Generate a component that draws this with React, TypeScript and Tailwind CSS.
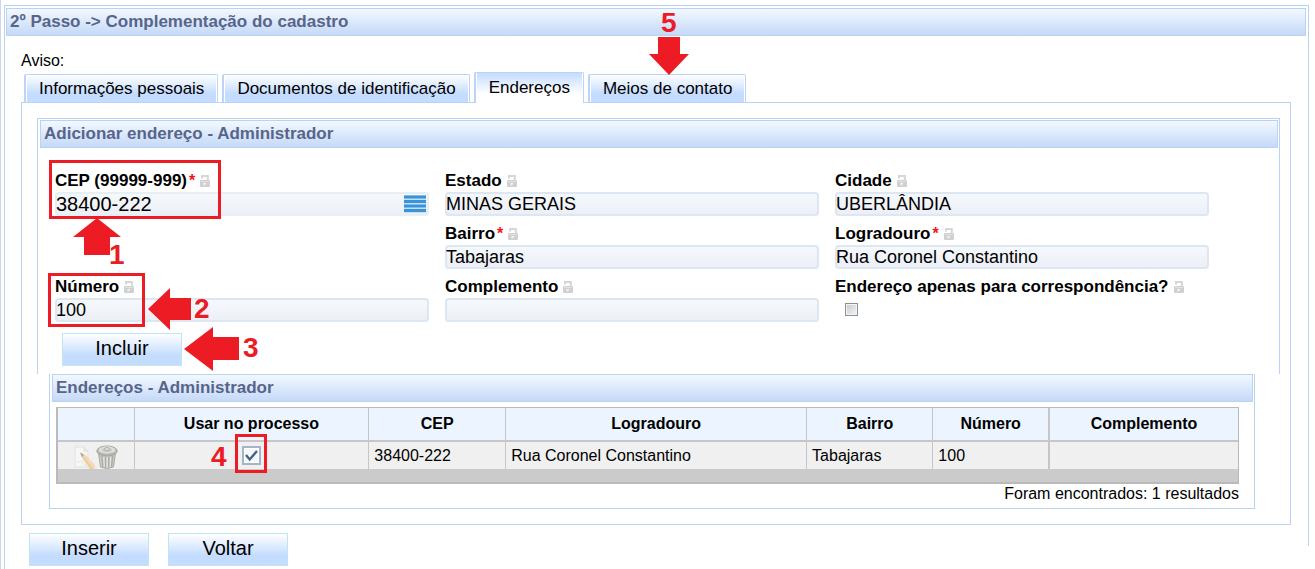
import React, { useState } from "react";

function LockIcon() {
  return (
    <svg width="10" height="12" viewBox="0 0 10 12" aria-hidden="true" className="shrink-0">
      <path d="M2 3.4V1H7.8V6" fill="none" stroke="#d6d6d6" strokeWidth="2" />
      <rect x="0" y="5" width="10" height="7" rx="1" fill="#d0d0d0" />
      <rect x="1" y="6" width="8" height="1" fill="#e2e2e2" />
      <path d="M3.5 8H6V9.5H4.5V10.5H3.5Z" fill="#f6f6f6" />
    </svg>
  );
}

function ListIcon() {
  return (
    <svg width="22" height="18" viewBox="0 0 22 18" aria-hidden="true">
      <rect width="22" height="18" fill="#c3e0f5" />
      {[0.5, 5, 9.5, 14].map((y) => (
        <rect key={y} y={y} width="22" height="3" fill="#3a93d8" />
      ))}
    </svg>
  );
}

function EditIcon() {
  return (
    <svg width="22" height="23" viewBox="0 0 22 23" aria-hidden="true">
      <path d="M1 1H10L14 5V21H1Z" fill="#f6f6f2" stroke="#dfe3e6" />
      <path d="M10 1V5H14" fill="#e6e9ea" stroke="#dcdfe2" />
      <path d="M3 17Q7 13 9 17T14 17" fill="none" stroke="#e2e4e6" />
      <path d="M6.5 7L12.5 9.5L21 19.5V23H15.5L9 14Z" fill="#f3d9b4" />
      <path d="M9.5 11L18 23" stroke="#e9c594" strokeWidth="1.2" />
      <path d="M6 6.5L10 8.5L8 11.5Z" fill="#a9aaa8" />
    </svg>
  );
}

function TrashIcon() {
  return (
    <svg width="22" height="24" viewBox="0 0 22 24" aria-hidden="true">
      <path d="M2.5 8L4.5 22Q11 25 17.5 22L19.5 8Z" fill="#c9c9c5" stroke="#aaaaa6" />
      <path d="M6 11L7 22M9.5 12V23M13 12L12.5 23M16.5 11L15.5 22" stroke="#a9a9a5" strokeWidth="1.3" />
      <path d="M7.7 12L8.3 22M11.2 12V23M14.7 12L14.2 22" stroke="#e6e6e2" strokeWidth="1.2" />
      <ellipse cx="11" cy="6" rx="10.2" ry="5" fill="#b5b5b1" stroke="#a3a39f" />
      <ellipse cx="11" cy="5" rx="8.5" ry="3.7" fill="#dededa" />
      <ellipse cx="11" cy="5" rx="5" ry="2" fill="#c9c9c5" />
      <ellipse cx="11" cy="4" rx="2.6" ry="1.4" fill="#e6e6e2" stroke="#adada9" />
    </svg>
  );
}

function Title({ children }: { children: React.ReactNode }) {
  return (
    <h2 className="h-7 border border-[#b9d3f5] bg-linear-to-b from-[#f3f8ff] to-[#c5d9f8] pl-[3px] text-[17px] leading-[26px] font-bold text-[#57658a]">
      {children}
    </h2>
  );
}

function Step({ n, className }: { n: number; className: string }) {
  return (
    <span className={`pointer-events-none absolute z-20 text-[28px] leading-7 font-bold text-[#ed1c24] ${className}`}>
      {n}
    </span>
  );
}

function Outline({ className }: { className: string }) {
  return <span className={`pointer-events-none absolute z-20 border-3 border-[#ed1c24] ${className}`} />;
}

type FieldProps = {
  id: string;
  label: string;
  value?: string;
  required?: boolean;
  large?: boolean;
  lookup?: boolean;
  className?: string;
  children?: React.ReactNode;
};

function FieldLabel({ id, label, required }: { id: string; label: string; required?: boolean }) {
  return (
    <div className="mb-px flex h-5 items-center">
      <label htmlFor={id} className="flex text-[17px] leading-5 font-bold whitespace-nowrap">
        {label}
        {required && <span className="ml-0.5 text-base leading-5 text-[#f51414]">*</span>}
      </label>
      <span className="ml-[5px] flex">
        <LockIcon />
      </span>
    </div>
  );
}

function Field({ id, label, value = "", required, large, lookup, className = "", children }: FieldProps) {
  return (
    <div className={`relative ${className}`}>
      <FieldLabel id={id} label={label} required={required} />
      <div
        className={`flex h-6 items-center rounded-[4px] bg-linear-to-b to-[#ebeff6] inset-ring-2 ${
          large ? "from-[#f6fafc] inset-ring-[#e6eef6]" : "from-[#f6f9fc] inset-ring-[#dde7f4]"
        }`}
      >
        <input
          id={id}
          defaultValue={value}
          className={`h-6 w-full min-w-0 bg-transparent pl-px outline-none ${large ? "text-[20px]" : "text-[18px]"}`}
        />
        {lookup && (
          <button type="button" aria-label="Buscar CEP" className="mr-[3px] shrink-0">
            <ListIcon />
          </button>
        )}
      </div>
      {children}
    </div>
  );
}

function ActionButton({ children }: { children: React.ReactNode }) {
  return (
    <button
      type="button"
      className="h-[33px] w-[120px] border border-[#bfe6f0] bg-linear-to-b from-white to-[#c4dcff] to-70% pb-1 text-[20px] leading-7"
    >
      {children}
    </button>
  );
}

const tabs = ["Informações pessoais", "Documentos de identificação", "Endereços", "Meios de contato"];

const columns = [
  { name: "", width: "w-[6.4%]" },
  { name: "Usar no processo", width: "w-[19.9%]" },
  { name: "CEP", width: "w-[11.6%]" },
  { name: "Logradouro", width: "w-[25.5%]" },
  { name: "Bairro", width: "w-[10.7%]" },
  { name: "Número", width: "w-[9.8%]" },
  { name: "Complemento", width: "w-[16.1%]" },
];

export default function App() {
  const [active, setActive] = useState(2);
  const [mailOnly, setMailOnly] = useState(false);
  const [inUse, setInUse] = useState(true);

  return (
    <div className="flex min-h-screen flex-col border-l border-[#ccd6ee] bg-white pt-[5px] pr-1.5 pl-[3px] font-['Liberation_Sans',Arial,sans-serif] text-black">
      <main className="grow border-l border-[#b9d3f5]">
        <section className="border-t border-r border-[#b9d3f5] pt-0.5 pr-0.5 pb-[21px] pl-px">
          <Title>2º Passo -&gt; Complementação do cadastro</Title>

          <div className="pt-[15px] pr-[15px] pl-[15px]">
            <p className="text-base leading-5">Aviso:</p>

            <div role="tablist" className="mt-px flex h-[30px] items-end gap-1 pl-[3px]">
              {tabs.map((tab, i) => (
                <div key={tab} className={`relative ${i === active ? "-mb-px" : ""}`}>
                  <button
                    type="button"
                    role="tab"
                    aria-selected={i === active}
                    onClick={() => setActive(i)}
                    className={`block rounded-t-[2px] border-t border-r border-l-2 border-[#bcd5f6] px-[13px] text-[17px] whitespace-nowrap shadow-[inset_1px_0_white,inset_-1px_0_white] ${
                      i === active
                        ? "h-[31px] bg-linear-to-b from-[#c4dcff] to-white to-70%"
                        : "h-7 bg-linear-to-b from-white to-[#c4dcff] to-70%"
                    }`}
                  >
                    {tab}
                  </button>
                  {i === 3 && (
                    <>
                      <Step n={5} className="-top-[65px] left-[73px]" />
                      <svg
                        width="40"
                        height="38"
                        viewBox="0 0 40 38"
                        aria-hidden="true"
                        className="absolute -top-[37px] left-[61px] z-20"
                      >
                        <path d="M9 0H31V17H40L20 38L0 17H9Z" fill="#ed1c24" />
                      </svg>
                    </>
                  )}
                </div>
              ))}
            </div>

            <div className="border border-[#b9d3f5] pt-[15px] pb-[15px]">
              <section className="mr-2.5 ml-[15px] border-x border-t border-[#b9d3f5] pt-px pb-2">
                <div className="pr-px pl-0.5">
                  <Title>Adicionar endereço - Administrador</Title>
                </div>

                <div className="grid grid-cols-3 gap-x-4 gap-y-2 pt-[23px] pr-[70px] pl-[17px]">
                  <Field id="cep" label="CEP (99999-999)" value="38400-222" required large lookup>
                    <Outline className="-top-[11px] -left-1.5 h-[59px] w-[172px]" />
                    <svg
                      width="48"
                      height="37"
                      viewBox="0 0 48 37"
                      aria-hidden="true"
                      className="absolute top-[47px] left-[18px] z-20"
                    >
                      <path d="M24 0L48 19H37V37H11V19H0Z" fill="#ed1c24" />
                    </svg>
                    <Step n={1} className="top-[70px] left-[54px]" />
                  </Field>
                  <Field id="estado" label="Estado" value="MINAS GERAIS" />
                  <Field id="cidade" label="Cidade" value="UBERLÂNDIA" />
                  <Field id="bairro" label="Bairro" value="Tabajaras" required className="col-start-2" />
                  <Field id="logradouro" label="Logradouro" value="Rua Coronel Constantino" required />
                  <Field id="numero" label="Número" value="100">
                    <Outline className="-top-1 -left-[7px] h-[54px] w-[97px]" />
                    <svg
                      width="43"
                      height="42"
                      viewBox="0 0 43 42"
                      aria-hidden="true"
                      className="absolute top-[11px] left-[93px] z-20"
                    >
                      <path d="M0 21L22 0V10H43V32H22V42Z" fill="#ed1c24" />
                    </svg>
                    <Step n={2} className="top-[18px] left-[139px]" />
                  </Field>
                  <Field id="complemento" label="Complemento" />
                  <div>
                    <FieldLabel id="correspondencia" label="Endereço apenas para correspondência?" />
                    <input
                      id="correspondencia"
                      type="checkbox"
                      checked={mailOnly}
                      onChange={(e) => setMailOnly(e.target.checked)}
                      className="mt-1.5 ml-2.5 block size-[13px] appearance-none border border-[#8e8f8f] bg-linear-to-br from-[#c4c9cf] to-[#f6f6f6] inset-ring-1 inset-ring-[#f4f4f4] checked:from-[#3b5f96]"
                    />
                  </div>
                </div>

                <div className="relative mt-[11px] ml-6 w-fit">
                  <ActionButton>Incluir</ActionButton>
                  <svg
                    width="55"
                    height="44"
                    viewBox="0 0 55 44"
                    aria-hidden="true"
                    className="absolute -top-1.5 left-[122px] z-20"
                  >
                    <path d="M0 22L29 0V10H55V33H29V44Z" fill="#ed1c24" />
                  </svg>
                  <Step n={3} className="top-px left-[181px]" />
                </div>
              </section>

              <section className="mr-[35px] ml-[27px] border-x border-b border-[#b9d3f5] pr-px pb-1 pl-0.5">
                <Title>Endereços - Administrador</Title>

                <div className="mt-[5px] mr-3.5 ml-1">
                  <div className="border-t border-r border-b-2 border-l-2 border-[#bababa]">
                    <table className="w-full table-fixed border-separate border-spacing-0 text-base leading-5">
                      <thead>
                        <tr className="h-[34px] bg-[#ebf4ff]">
                          {columns.map((c, i) => (
                            <th
                              key={i}
                              className={`border-b-2 border-[#c6c6c6] p-0 ${c.width} ${
                                i === 6 ? "border-l-2" : i > 0 ? "border-l" : ""
                              }`}
                            >
                              {c.name}
                            </th>
                          ))}
                        </tr>
                      </thead>
                      <tbody>
                        <tr className="h-[27px] bg-[#f0f0f0]">
                          <td className="p-0">
                            <div className="flex h-[27px] items-end justify-center overflow-hidden">
                              <button type="button" aria-label="Editar">
                                <EditIcon />
                              </button>
                              <button type="button" aria-label="Excluir">
                                <TrashIcon />
                              </button>
                            </div>
                          </td>
                          <td className="border-l border-[#c6c6c6] p-0">
                            <div className="relative mx-auto size-[19px]">
                              <input
                                type="checkbox"
                                aria-label="Usar no processo"
                                checked={inUse}
                                onChange={(e) => setInUse(e.target.checked)}
                                className="block size-[19px] appearance-none border-2 border-[#a3b5cb] bg-[#f5f8fb] inset-ring-1 inset-ring-white"
                              />
                              {inUse && (
                                <svg
                                  width="19"
                                  height="19"
                                  viewBox="0 0 19 19"
                                  aria-hidden="true"
                                  className="pointer-events-none absolute inset-0"
                                >
                                  <path d="M4 9L7.7 13.5L15 5" fill="none" stroke="#4c5f86" strokeWidth="2.4" />
                                </svg>
                              )}
                              <Outline className="-top-3 -left-[7px] h-[39px] w-8" />
                              <Step n={4} className="-top-[3px] -left-[31px]" />
                            </div>
                          </td>
                          <td className="border-l border-[#c6c6c6] p-0 pl-[5px]">38400-222</td>
                          <td className="border-l border-[#c6c6c6] p-0 pl-[5px]">Rua Coronel Constantino</td>
                          <td className="border-l border-[#c6c6c6] p-0 pl-[5px]">Tabajaras</td>
                          <td className="border-l border-[#c6c6c6] p-0 pl-[5px]">100</td>
                          <td className="border-l-2 border-[#c6c6c6] p-0" />
                        </tr>
                      </tbody>
                    </table>
                    <div className="h-[13px] bg-[#cbcbcb]" />
                  </div>
                  <p className="text-right text-base leading-5">Foram encontrados: 1 resultados</p>
                </div>
              </section>
            </div>
          </div>
        </section>

        <div className="-mt-[13px] ml-6 flex gap-[19px]">
          <ActionButton>Inserir</ActionButton>
          <ActionButton>Voltar</ActionButton>
        </div>
      </main>
    </div>
  );
}
